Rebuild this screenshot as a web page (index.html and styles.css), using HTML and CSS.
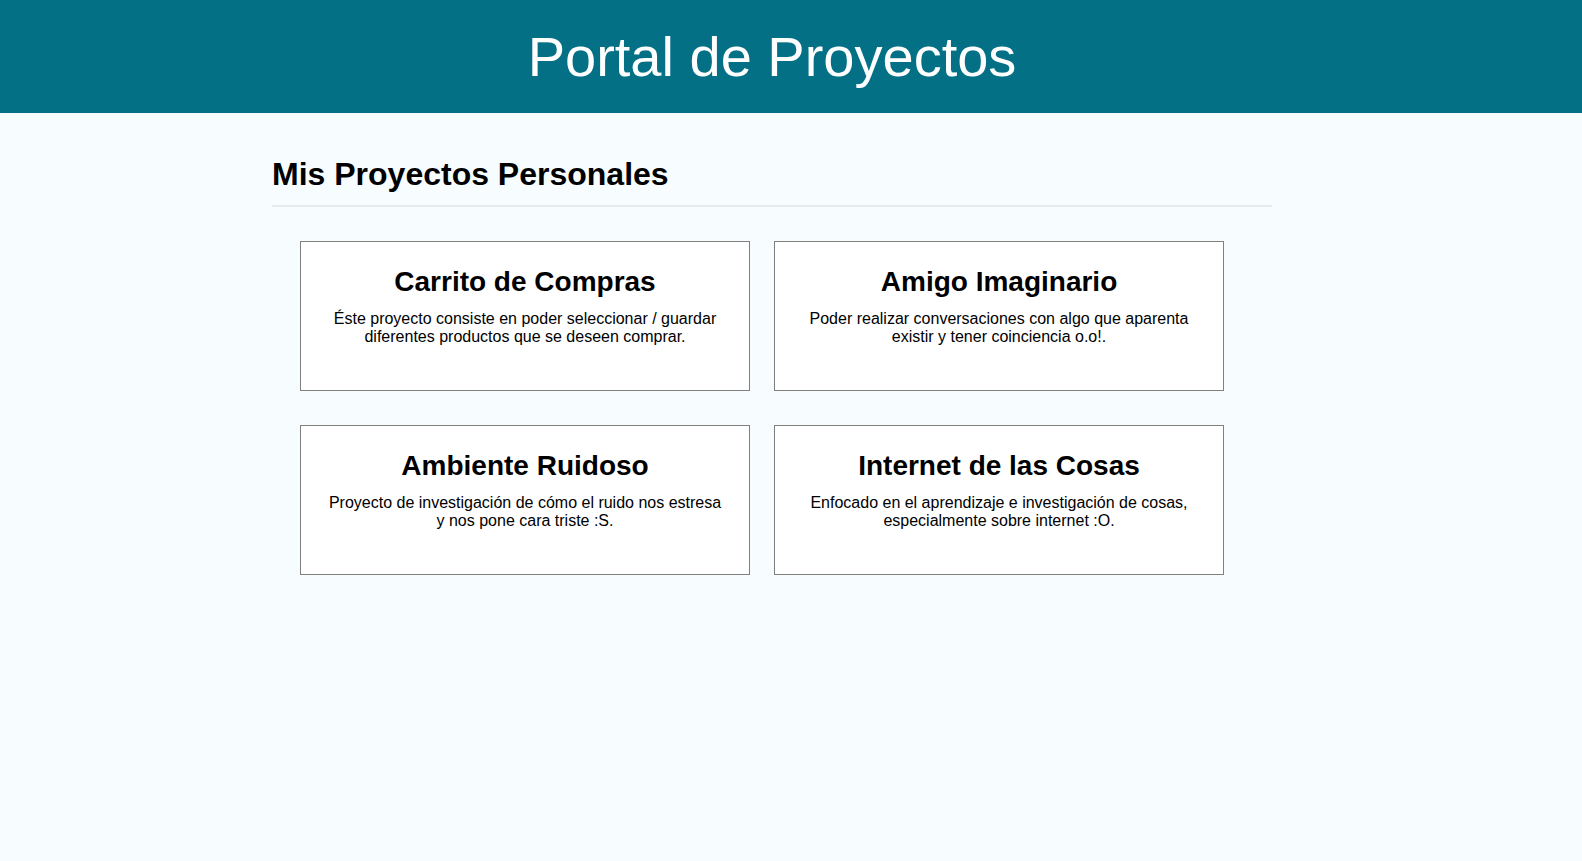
FILE: index.html
```html
<!DOCTYPE html>
<html lang="es">
<head>
<meta charset="utf-8">
<title>Portal de Proyectos</title>
<link rel="stylesheet" href="styles.css">
</head>
<body>
<header class="site-header">
  <h1 class="site-title">Portal de Proyectos</h1>
</header>
<main class="content">
  <h2 class="section-title">Mis Proyectos Personales</h2>
  <div class="cards">
    <div class="card">
      <h3 class="card-title">Carrito de Compras</h3>
      <p class="card-text">Éste proyecto consiste en poder seleccionar / guardar diferentes productos que se deseen comprar.</p>
    </div>
    <div class="card">
      <h3 class="card-title">Amigo Imaginario</h3>
      <p class="card-text">Poder realizar conversaciones con algo que aparenta existir y tener coinciencia o.o!.</p>
    </div>
    <div class="card">
      <h3 class="card-title">Ambiente Ruidoso</h3>
      <p class="card-text">Proyecto de investigación de cómo el ruido nos estresa y nos pone cara triste :S.</p>
    </div>
    <div class="card">
      <h3 class="card-title">Internet de las Cosas</h3>
      <p class="card-text">Enfocado en el aprendizaje e investigación de cosas, especialmente sobre internet :O.</p>
    </div>
  </div>
</main>
</body>
</html>
```

FILE: styles.css
```css
html, body {
  margin: 0;
  padding: 0;
}

body {
  background: #f7fcff;
  color: #000;
  font-family: "Liberation Sans", Arial, sans-serif;
}

.site-header {
  background: #037086;
  height: 113px;
  box-sizing: border-box;
  padding: 24px 38px 0 0;
  text-align: center;
}

.site-title {
  margin: 0;
  color: #fff;
  font-size: 56px;
  font-weight: normal;
  line-height: normal;
}

.content {
  width: 1000px;
  margin-left: 272px;
}

.section-title {
  margin: 43px 0 0;
  padding-bottom: 12px;
  border-bottom: 2px solid #e7ebee;
  font-size: 32px;
  font-weight: bold;
  line-height: normal;
}

.cards {
  display: grid;
  grid-template-columns: 450px 450px;
  column-gap: 24px;
  row-gap: 34px;
  margin-top: 34px;
  padding-left: 28px;
}

.card {
  box-sizing: border-box;
  height: 150px;
  background: #fff;
  border: 1px solid #808080;
  padding: 0 24px;
  text-align: center;
}

.card-title {
  margin: 24px 0 12px;
  font-size: 28px;
  font-weight: bold;
  line-height: normal;
}

.card-text {
  margin: 0;
  font-size: 16px;
  line-height: normal;
}
```
